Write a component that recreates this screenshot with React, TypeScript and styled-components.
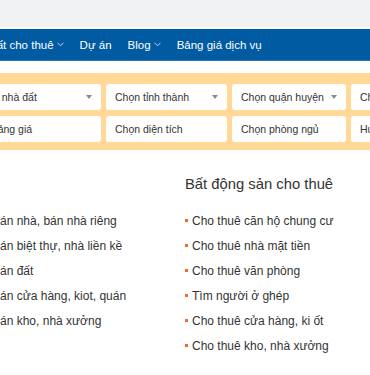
import React from 'react';
import styled, { createGlobalStyle } from 'styled-components';

const GlobalStyle = createGlobalStyle`
  body {
    margin: 0;
    font-family: 'Liberation Sans', Arial, sans-serif;
    background: #fff;
    overflow: hidden;
  }
`;

const TopBar = styled.div`
  height: 27px;
  background: #f1f2f4;
`;

const Nav = styled.nav`
  margin-top: 2px;
  height: 31px;
  background: #005ba3;
  border-bottom: 1px solid #2a78b8;
  display: flex;
  align-items: center;
`;

const NavTrack = styled.ul`
  list-style: none;
  margin: 0 0 0 -34px;
  padding: 0;
  display: flex;
  align-items: center;
  gap: 16px;
`;

const NavItem = styled.li`
  color: #fff;
  font-size: 11.5px;
  display: flex;
  align-items: center;
  gap: 3px;
  white-space: nowrap;
`;

const Chevron = () => (
  <svg width="7" height="5" viewBox="0 0 7 5" fill="none">
    <path d="M0.5 0.8 L3.5 3.8 L6.5 0.8" stroke="#cfe0f0" strokeWidth="0.9" />
  </svg>
);

const FilterBand = styled.section`
  margin-top: 12px;
  background: #ffd995;
  padding: 11px 0 8px;
`;

const FilterGrid = styled.div`
  margin-left: -30px;
  display: grid;
  grid-template-columns: 131px 121px 114px 121px;
  grid-auto-rows: 26px;
  column-gap: 5px;
  row-gap: 6px;
`;

const Select = styled.div`
  background: #fff;
  border-radius: 3px;
  display: flex;
  align-items: center;
  justify-content: space-between;
  padding: 0 9px;
  font-size: 10.5px;
  color: #333;
  white-space: nowrap;
  overflow: hidden;
`;

const Caret = styled.span<{ $show: boolean }>`
  display: ${(p) => (p.$show ? 'block' : 'none')};
  width: 0;
  height: 0;
  border-left: 3.5px solid transparent;
  border-right: 3.5px solid transparent;
  border-top: 4px solid #8a8a8a;
  flex-shrink: 0;
`;

const Content = styled.section`
  margin-left: -15px;
  display: grid;
  grid-template-columns: 200px 1fr;
  padding-top: 26px;
`;

const Column = styled.div``;

const Heading = styled.h3`
  margin: 0 0 14px;
  height: 18px;
  font-size: 14.8px;
  font-weight: 400;
  color: #333;
  white-space: nowrap;
`;

const List = styled.ul`
  list-style: none;
  margin: 0;
  padding: 0;
`;

const Item = styled.li`
  height: 25px;
  display: flex;
  align-items: center;
  gap: 4px;
  font-size: 12px;
  color: #333;
  white-space: nowrap;
  &::before {
    content: '';
    width: 3px;
    height: 3px;
    background: #f26b2c;
    flex-shrink: 0;
  }
`;

const navItems = [
  { label: 'Nhà đất cho thuê', drop: true },
  { label: 'Dự án', drop: false },
  { label: 'Blog', drop: true },
  { label: 'Bảng giá dịch vụ', drop: false },
];

const filters = [
  { label: 'Loại nhà đất', caret: true },
  { label: 'Chọn tỉnh thành', caret: true },
  { label: 'Chọn quận huyện', caret: true },
  { label: 'Chọn dự án', caret: true },
  { label: 'Khoảng giá', caret: false },
  { label: 'Chọn diện tích', caret: false },
  { label: 'Chọn phòng ngủ', caret: false },
  { label: 'Hướng nhà', caret: false },
];

const sale = [
  'Bán nhà, bán nhà riêng',
  'Bán biệt thự, nhà liền kề',
  'Bán đất',
  'Bán cửa hàng, kiot, quán',
  'Bán kho, nhà xưởng',
];

const rent = [
  'Cho thuê căn hộ chung cư',
  'Cho thuê nhà mặt tiền',
  'Cho thuê văn phòng',
  'Tìm người ở ghép',
  'Cho thuê cửa hàng, ki ốt',
  'Cho thuê kho, nhà xưởng',
];

export default function App() {
  return (
    <>
      <GlobalStyle />
      <TopBar />
      <Nav>
        <NavTrack>
          {navItems.map((n) => (
            <NavItem key={n.label}>
              {n.label}
              {n.drop && <Chevron />}
            </NavItem>
          ))}
        </NavTrack>
      </Nav>
      <FilterBand>
        <FilterGrid>
          {filters.map((f) => (
            <Select key={f.label}>
              {f.label}
              <Caret $show={f.caret} />
            </Select>
          ))}
        </FilterGrid>
      </FilterBand>
      <Content>
        <Column>
          <Heading />
          <List>
            {sale.map((s) => (
              <Item key={s}>{s}</Item>
            ))}
          </List>
        </Column>
        <Column>
          <Heading>Bất động sản cho thuê</Heading>
          <List>
            {rent.map((s) => (
              <Item key={s}>{s}</Item>
            ))}
          </List>
        </Column>
      </Content>
    </>
  );
}
